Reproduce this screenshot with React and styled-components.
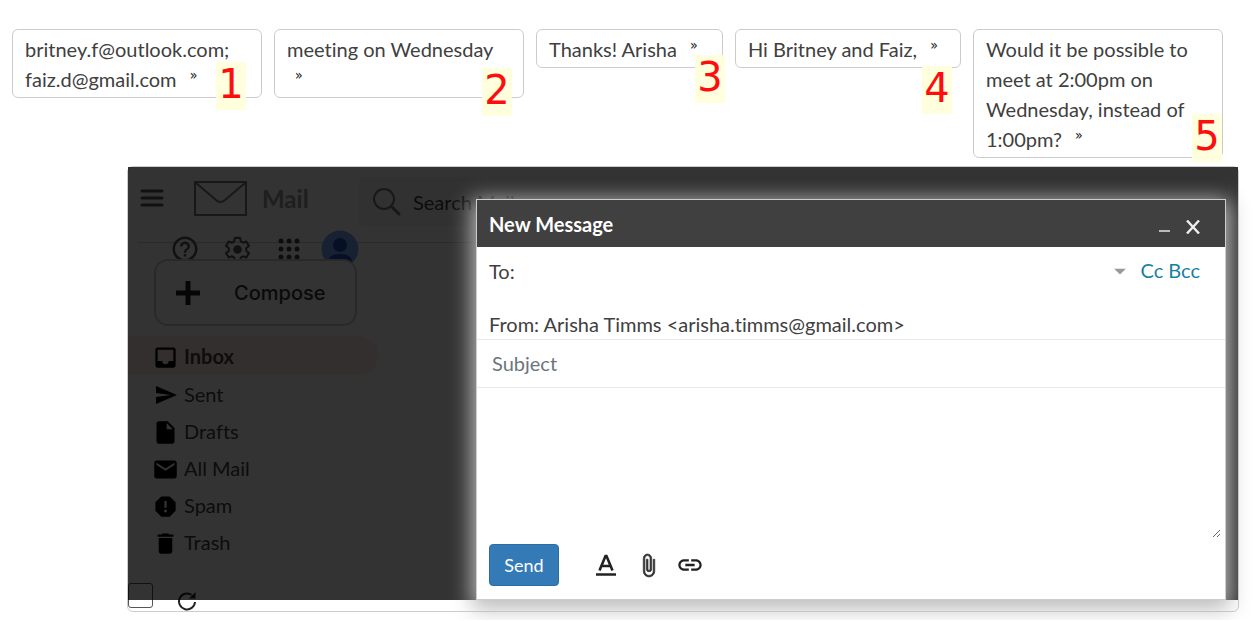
import React from "react";
import styled, { createGlobalStyle } from "styled-components";
import {
  MdInbox,
  MdSend,
  MdInsertDriveFile,
  MdMail,
  MdReport,
  MdDelete,
  MdLink,
  MdHelpOutline,
  MdArrowDropDown,
} from "react-icons/md";

const GlobalStyle = createGlobalStyle`
  *, *::before, *::after { box-sizing: border-box; }
  body {
    margin: 0;
    background: #fff;
    color: #404040;
    font: 20px/30px Lato, "Liberation Sans", sans-serif;
    font-variant-ligatures: none;
  }
  button, input, textarea { font: inherit; color: inherit; }
  svg { display: block; flex: none; }
`;

const Page = styled.main`
  padding: 29px 14px 8px 12px;
`;

const Chips = styled.ol`
  display: flex;
  align-items: flex-start;
  gap: 12px;
  margin: 0 0 8px;
  padding: 0;
  list-style: none;
`;

const Chip = styled.li`
  position: relative;
  width: ${(p) => p.$width || 250}px;
  flex: none;
  padding: 4px 12px 3px;
  border: 1px solid #ccc;
  border-radius: 6px;
`;

const Mark = styled.sup`
  margin-left: 8px;
  color: #111;
  font: 14px/14px "DejaVu Sans Condensed", "DejaVu Sans", sans-serif;
  vertical-align: 7px;
`;

const Badge = styled.span`
  position: absolute;
  right: ${(p) => p.$right}px;
  bottom: ${(p) => p.$bottom}px;
  z-index: 1;
  width: 30px;
  height: 48px;
  background: #ffffdd;
  color: #f00;
  font: 40px/44px "DejaVu Sans", sans-serif;
  text-align: center;
  opacity: 0.95;
`;

const Mailbox = styled.section`
  position: relative;
  margin-left: 115px;
  border: 1px solid #ccc;
  border-radius: 6px;
`;

const TopBar = styled.header`
  display: flex;
  align-items: flex-start;
  height: 60px;
  padding: 10px 10px 0;
`;

const IconButton = styled.button`
  display: flex;
  align-items: center;
  justify-content: center;
  padding: 0;
  border: 0;
  background: none;
  color: ${(p) => p.$color || "#222"};
`;

const MenuButton = styled(IconButton)`
  width: 28px;
  height: 42px;
`;

const Brand = styled.div`
  display: flex;
  align-items: center;
  gap: 14px;
  width: 192px;
  height: 43px;
  padding-left: 28px;
  color: #999;
  font-size: 24px;
  font-weight: 700;
`;

const Search = styled.label`
  display: flex;
  flex: 1;
  align-items: center;
  gap: 11px;
  height: 50px;
  padding-left: 14px;
  border-radius: 8px;
  background: #f5f5f5;
`;

const SearchInput = styled.input`
  flex: 1;
  min-width: 0;
  padding: 0;
  border: 0;
  background: none;
  &::placeholder { color: #404040; opacity: 1; }
`;

const Tools = styled.div`
  display: flex;
  align-items: center;
  height: 38px;
  padding-left: 43px;
`;

const Tool = styled(IconButton)`
  width: 28px;
  height: 38px;
  margin-right: 24px;
  color: #555;
`;

const ToolLine = styled.div`
  height: 16px;
  margin: 0 10px -13px;
  border-bottom: 1px solid #d0d0d0;
`;

const Avatar = styled(IconButton)`
  width: 38px;
  height: 38px;
  margin-left: -6px;
`;

const Compose = styled.button`
  position: relative;
  display: flex;
  align-items: center;
  gap: 33px;
  width: 203px;
  height: 67px;
  margin: -9px 0 10px 26px;
  padding: 0 0 0 19px;
  border: 2px solid #ccc;
  border-radius: 14px;
  background: #fff;
  color: #333;
  font: 500 20px/30px Inter, Lato, sans-serif;
`;

const Folders = styled.nav`
  width: 250px;
  display: flex;
  flex-direction: column;
`;

const Folder = styled.a`
  display: flex;
  align-items: center;
  gap: 5px;
  height: ${(p) => (p.$active ? 39 : 37)}px;
  padding-left: 24px;
  border-radius: 0 19px 19px 0;
  background: ${(p) => (p.$active ? "#fce8e6" : "none")};
  color: #404040;
  font-weight: ${(p) => (p.$active ? 700 : 400)};
  text-decoration: none;
`;

const FolderIcon = styled.span`
  display: flex;
  justify-content: center;
  width: 27px;
  padding-top: 3px;
  color: #000;
`;

const ListTools = styled.div`
  display: flex;
  align-items: flex-start;
  gap: 20px;
  height: 28px;
  margin-top: 23px;
`;

const SelectAll = styled.input`
  appearance: none;
  width: 25px;
  height: 25px;
  margin: 0;
  border: 1px solid #555;
  border-radius: 3px;
  background: #fff;
`;

const Refresh = styled(IconButton)`
  width: 28px;
  height: 28px;
  margin-top: 4px;
`;

const Shade = styled.div`
  position: absolute;
  inset: 0 0 11px;
  background: rgba(0, 0, 0, 0.8);
`;

const Dialog = styled.form`
  position: absolute;
  top: 32px;
  left: 348px;
  right: 12px;
  border: 1px solid #ccc;
  background: #fff;
  box-shadow: 0 5px 20px 4px #bbb;
`;

const DialogHead = styled.div`
  display: flex;
  align-items: center;
  height: 47px;
  padding: 0 22px 0 12px;
  background: #404040;
  color: #fff;
`;

const Title = styled.h2`
  flex: 1;
  margin: 0;
  font-size: 20px;
  font-weight: 700;
`;

const WindowButton = styled(IconButton)`
  width: 20px;
  height: 24px;
  margin: 6px 0 0 8px;
`;

const ToRow = styled.div`
  display: flex;
  align-items: center;
  padding: 9px 25px 0 12px;
`;

const ToInput = styled.input`
  flex: 1;
  min-width: 0;
  height: 30px;
  margin-left: 8px;
  padding: 0;
  border: 0;
  background: none;
`;

const Copies = styled.div`
  display: flex;
  gap: 5px;
  margin: -2px 0 0 7px;
`;

const CopyLink = styled.a`
  color: #1a7f9e;
  text-decoration: none;
`;

const FromRow = styled.div`
  padding: 23px 12px 0;
  border-bottom: 1px solid #e8e8e8;
`;

const Subject = styled.input`
  display: block;
  width: 100%;
  height: 48px;
  padding: 0 15px 2px;
  border: 0;
  border-bottom: 1px solid #e8e8e8;
  background: none;
  &::placeholder { color: #6c757d; opacity: 1; }
`;

const BodyWrap = styled.div`
  padding-right: 4px;
`;

const Body = styled.textarea`
  display: block;
  width: 100%;
  height: 150px;
  padding: 8px 14px;
  border: 0;
  background: none;
  resize: vertical;
`;

const Actions = styled.div`
  display: flex;
  align-items: center;
  gap: 14px;
  padding: 6px 12px 13px;
`;

const Send = styled.button`
  width: 70px;
  height: 42px;
  margin-right: 19px;
  padding: 0;
  border: 1px solid #2e6da4;
  border-radius: 4px;
  background: #337ab7;
  color: #fff;
  font-size: 18px;
`;

const Action = styled(IconButton)`
  width: 28px;
  height: 28px;
`;

const chips = [
  { text: "britney.f@outlook.com; faiz.d@gmail.com", right: 15, bottom: -13 },
  { text: "meeting on Wednesday", right: 11, bottom: -19 },
  { text: "Thanks! Arisha", width: 187, right: -3, bottom: -36 },
  { text: "Hi Britney and Faiz,", width: 226, right: 8, bottom: -47 },
  {
    text: "Would it be possible to meet at 2:00pm on Wednesday, instead of 1:00pm?",
    right: 0,
    bottom: -5,
  },
];

const folders = [
  { name: "Inbox", Icon: MdInbox, size: 27, active: true },
  { name: "Sent", Icon: MdSend, size: 24 },
  { name: "Drafts", Icon: MdInsertDriveFile, size: 27 },
  { name: "All Mail", Icon: MdMail, size: 27 },
  { name: "Spam", Icon: MdReport, size: 27 },
  { name: "Trash", Icon: MdDelete, size: 27 },
];

const MenuIcon = () => (
  <svg width="24" height="18" viewBox="0 0 24 18" stroke="#555" strokeWidth="3" strokeLinecap="round">
    <path d="M2 2h20M2 9h20M2 16h20" />
  </svg>
);

const EnvelopeIcon = () => (
  <svg width="54" height="36" viewBox="0 0 54 36" fill="none" stroke="#777" strokeWidth="2">
    <path d="M1 1h51v33H1zM2 2l20 17q4 4 9 0L51 2" />
  </svg>
);

const SearchIcon = () => (
  <svg width="30" height="30" viewBox="0 0 30 30" fill="none" stroke="#777" strokeLinecap="round">
    <circle cx="12" cy="12" r="10" strokeWidth="2" />
    <path d="M20 20l7 7" strokeWidth="3" />
  </svg>
);

const GearIcon = () => (
  <svg width="31" height="31" viewBox="0 0 24 24">
    <path
      d="M10 3h4l.5 2.7 1.7 1 2.6-.9 2 3.4-2.1 1.8v2l2.1 1.8-2 3.4-2.6-.9-1.7 1L14 21h-4l-.5-2.7-1.7-1-2.6.9-2-3.4L5.300 13v-2L3.200 9.200l2-3.400 2.600.900 1.700-1z"
      fill="none"
      stroke="#555"
      strokeWidth="1.600"
      strokeLinejoin="round"
    />
    <circle cx="12" cy="12" r="3.300" fill="#555" />
  </svg>
);

const AppsIcon = () => (
  <svg width="22" height="22" viewBox="0 0 22 22" fill="#444">
    {[3, 11, 19].map((y) => [3, 11, 19].map((x) => <circle key={x + "-" + y} cx={x} cy={y} r="2.500" />))}
  </svg>
);

const PersonIcon = () => (
  <svg width="38" height="38" viewBox="0 0 38 38">
    <circle cx="19" cy="19" r="18.500" fill="#7ba6f5" />
    <circle cx="19" cy="15" r="7" fill="#1a4fc4" />
    <path d="M7 33q0-9 12-9t12 9q-12 9-24 0z" fill="#1a4fc4" />
  </svg>
);

const PlusIcon = () => (
  <svg width="26" height="26" viewBox="0 0 26 26" stroke="#222" strokeWidth="5">
    <path d="M13 1v24M1 13h24" />
  </svg>
);

const RefreshIcon = () => (
  <svg width="20" height="20" viewBox="0 0 20 20">
    <path d="M18 11a8 8 0 1 1-3.500-7.200" fill="none" stroke="#222" strokeWidth="2" />
    <path d="M18.500 1v6.500H12z" fill="#222" />
  </svg>
);

const MinimizeIcon = () => (
  <svg width="12" height="20" viewBox="0 0 12 20" stroke="#bbb" strokeWidth="2">
    <path d="M0 14h11" />
  </svg>
);

const CloseIcon = () => (
  <svg width="14" height="14" viewBox="0 0 14 14" stroke="#eee" strokeWidth="2.400">
    <path d="M1 .5l12 13M13 .5l-12 13" />
  </svg>
);

const TextStyleIcon = () => (
  <svg width="22" height="24" viewBox="0 0 22 24" fill="none" stroke="#222">
    <path d="M4.500 17.500L10.500 3h1l6 14.500M7 13h8" strokeWidth="2.600" />
    <path d="M1 21.500h20" strokeWidth="2.500" />
  </svg>
);

const ClipIcon = () => (
  <svg width="25" height="25" viewBox="0 0 24 24" fill="#333" stroke="#333" strokeWidth="0.700">
    <path d="M16.500 6v11.500c0 2.210-1.790 4-4 4s-4-1.790-4-4V5a2.500 2.500 0 0 1 5 0v10.500c0 .550-.450 1-1 1s-1-.450-1-1V6H10v9.500a2.500 2.500 0 0 0 5 0V5c0-2.210-1.790-4-4-4S7 2.790 7 5v12.500c0 3.040 2.460 5.500 5.500 5.500s5.500-2.460 5.500-5.500V6h-1.500z" />
  </svg>
);

export default function App() {
  return (
    <>
      <GlobalStyle />
      <Page>
        <Chips>
          {chips.map((chip, i) => (
            <Chip key={chip.text} $width={chip.width}>
              {chip.text} <Mark>»</Mark>
              <Badge $right={chip.right} $bottom={chip.bottom}>{i + 1}</Badge>
            </Chip>
          ))}
        </Chips>

        <Mailbox>
          <TopBar>
            <MenuButton type="button" aria-label="Menu"><MenuIcon /></MenuButton>
            <Brand><EnvelopeIcon />Mail</Brand>
            <Search>
              <SearchIcon />
              <SearchInput type="text" placeholder="Search Mail" aria-label="Search mail" />
            </Search>
          </TopBar>
          <ToolLine />
          <Tools>
            <Tool type="button" aria-label="Help"><MdHelpOutline size={30} /></Tool>
            <Tool type="button" aria-label="Settings"><GearIcon /></Tool>
            <Tool type="button" aria-label="Apps"><AppsIcon /></Tool>
            <Avatar type="button" aria-label="Account"><PersonIcon /></Avatar>
          </Tools>
          <Compose type="button"><PlusIcon />Compose</Compose>
          <Folders>
            {folders.map(({ name, Icon, size, active }) => (
              <Folder key={name} href="#" $active={active}>
                <FolderIcon><Icon size={size} /></FolderIcon>{name}
              </Folder>
            ))}
          </Folders>
          <ListTools>
            <SelectAll type="checkbox" aria-label="Select all" />
            <Refresh type="button" aria-label="Refresh"><RefreshIcon /></Refresh>
          </ListTools>

          <Shade />
          <Dialog aria-label="New Message">
            <DialogHead>
              <Title>New Message</Title>
              <WindowButton type="button" aria-label="Minimize"><MinimizeIcon /></WindowButton>
              <WindowButton type="button" aria-label="Close"><CloseIcon /></WindowButton>
            </DialogHead>
            <ToRow>
              <label htmlFor="to">To:</label>
              <ToInput id="to" type="text" />
              <IconButton type="button" aria-label="Choose recipients" $color="#999">
                <MdArrowDropDown size={28} />
              </IconButton>
              <Copies>
                <CopyLink href="#">Cc</CopyLink>
                <CopyLink href="#">Bcc</CopyLink>
              </Copies>
            </ToRow>
            <FromRow>From: Arisha Timms &lt;arisha.timms@gmail.com&gt;</FromRow>
            <Subject type="text" placeholder="Subject" aria-label="Subject" />
            <BodyWrap><Body aria-label="Message body" /></BodyWrap>
            <Actions>
              <Send type="button">Send</Send>
              <Action type="button" aria-label="Text formatting"><TextStyleIcon /></Action>
              <Action type="button" aria-label="Attach file"><ClipIcon /></Action>
              <Action type="button" aria-label="Insert link"><MdLink size={28} /></Action>
            </Actions>
          </Dialog>
        </Mailbox>
      </Page>
    </>
  );
}
